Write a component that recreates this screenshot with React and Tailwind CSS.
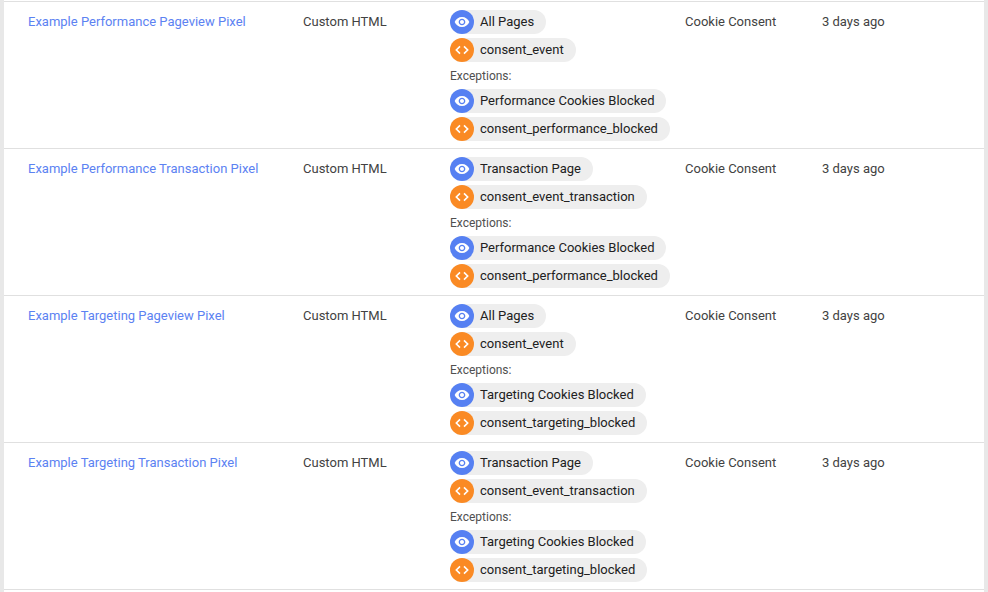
import React from 'react';

const rows = [
  {
    name: 'Example Performance Pageview Pixel',
    triggers: ['All Pages', 'consent_event'],
    exceptions: ['Performance Cookies Blocked', 'consent_performance_blocked'],
  },
  {
    name: 'Example Performance Transaction Pixel',
    triggers: ['Transaction Page', 'consent_event_transaction'],
    exceptions: ['Performance Cookies Blocked', 'consent_performance_blocked'],
  },
  {
    name: 'Example Targeting Pageview Pixel',
    triggers: ['All Pages', 'consent_event'],
    exceptions: ['Targeting Cookies Blocked', 'consent_targeting_blocked'],
  },
  {
    name: 'Example Targeting Transaction Pixel',
    triggers: ['Transaction Page', 'consent_event_transaction'],
    exceptions: ['Targeting Cookies Blocked', 'consent_targeting_blocked'],
  },
];

function EyeIcon() {
  return (
    <svg width="16" height="16" viewBox="0 0 24 24" fill="#fff">
      <path d="M12 4.5C7 4.5 2.73 7.61 1 12c1.73 4.39 6 7.5 11 7.5s9.27-3.11 11-7.5c-1.73-4.39-6-7.5-11-7.5zM12 17c-2.76 0-5-2.24-5-5s2.24-5 5-5 5 2.24 5 5-2.24 5-5 5zm0-8c-1.66 0-3 1.34-3 3s1.34 3 3 3 3-1.34 3-3-1.34-3-3-3z" />
    </svg>
  );
}

function CodeIcon() {
  return (
    <svg width="16" height="16" viewBox="0 0 24 24" fill="none" stroke="#fff" strokeWidth="2.4">
      <path d="M9 6.500 3.500 12 9 17.500M15 6.500 20.500 12 15 17.500" />
    </svg>
  );
}

function Chip({ label }) {
  // the trigger names with underscores are the custom event ones
  const isEvent = label.includes('_');
  return (
    <div className="flex">
      <div className="flex h-6 items-center rounded-full bg-[#eeeeee] pr-3">
        <span className={`flex h-6 w-6 items-center justify-center rounded-full ${isEvent ? 'bg-[#fa8a24]' : 'bg-[#5680f2]'}`}>
          {isEvent ? <CodeIcon /> : <EyeIcon />}
        </span>
        <span className="ml-1.5 text-[13px] leading-6 text-[#212121]">{label}</span>
      </div>
    </div>
  );
}

function Row({ row }) {
  return (
    <div className="flex h-[147px] border-t border-[#e0e0e0] pt-2 text-[13px] leading-6 text-[#424242]">
      <a className="w-[299px] pl-6 text-[#5c82f2]">{row.name}</a>
      <div className="w-[147px]">Custom HTML</div>
      <div className="flex w-[235px] flex-col">
        <div className="flex flex-col gap-1">
          {row.triggers.map((t) => <Chip key={t} label={t} />)}
        </div>
        <div className="mt-1 mb-[2px] text-xs leading-[21px] text-[#505050]">Exceptions:</div>
        <div className="flex flex-col gap-1">
          {row.exceptions.map((t) => <Chip key={t} label={t} />)}
        </div>
      </div>
      <div className="w-[137px]">Cookie Consent</div>
      <div>3 days ago</div>
    </div>
  );
}

export default function App() {
  return (
    <div className="h-[592px] overflow-hidden bg-[#e8e8e8] px-[4px] font-['Roboto',sans-serif]">
      <div className="h-full bg-white pt-px">
        <div className="border-b border-[#e0e0e0]">
          {rows.map((row) => <Row key={row.name} row={row} />)}
        </div>
      </div>
    </div>
  );
}
